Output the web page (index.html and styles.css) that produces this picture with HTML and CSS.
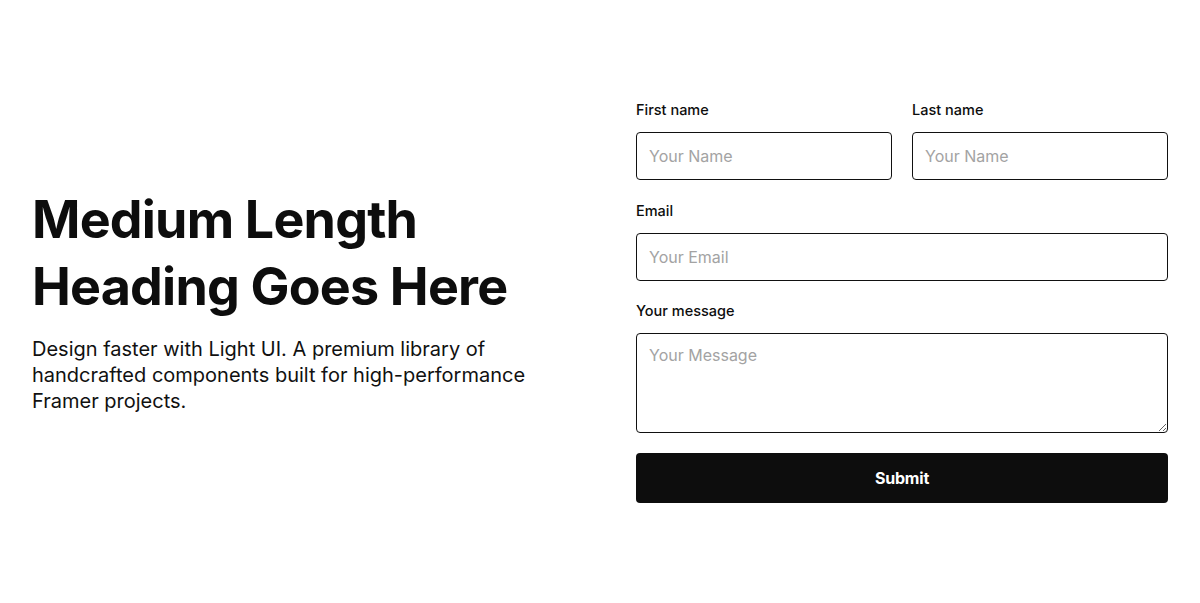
FILE: index.html
```html
<!DOCTYPE html>
<html lang="en">
<head>
<meta charset="utf-8">
<title>Contact</title>
<link rel="stylesheet" href="styles.css">
</head>
<body>
<main class="page">
  <section class="intro">
    <h1 class="heading">Medium Length Heading Goes Here</h1>
    <p class="lead">Design faster with Light UI. A premium library of handcrafted components built for high-performance Framer projects.</p>
  </section>
  <form class="form">
    <div class="row">
      <label class="field">
        <span class="label">First name</span>
        <input class="input" type="text" placeholder="Your Name">
      </label>
      <label class="field">
        <span class="label">Last name</span>
        <input class="input" type="text" placeholder="Your Name">
      </label>
    </div>
    <label class="field">
      <span class="label">Email</span>
      <input class="input" type="email" placeholder="Your Email">
    </label>
    <label class="field">
      <span class="label">Your message</span>
      <textarea class="input textarea" placeholder="Your Message"></textarea>
    </label>
    <button class="submit" type="button">Submit</button>
  </form>
</main>
</body>
</html>
```

FILE: styles.css
```css
* { box-sizing: border-box; }
html, body { margin: 0; padding: 0; background: #fff; }
body {
  font-family: Inter, "Liberation Sans", sans-serif;
  color: #0d0d0d;
}
.page {
  display: grid;
  grid-template-columns: 1fr 1fr;
  column-gap: 72px;
  align-items: center;
  padding: 0 32px;
  height: 603px;
}
.intro {
  margin-top: -4px;
}
.heading {
  margin: 0;
  font-size: 52px;
  line-height: 67px;
  font-weight: 700;
  letter-spacing: -0.8px;
}
.lead {
  margin: 16px 0 0;
  font-size: 20px;
  line-height: 26px;
  font-weight: 400;
  color: #111;
}
.form {
  display: flex;
  flex-direction: column;
  gap: 20px;
}
.row {
  display: grid;
  grid-template-columns: 1fr 1fr;
  column-gap: 20px;
  margin-bottom: 1px;
}
.field {
  display: flex;
  flex-direction: column;
  gap: 12px;
}
.label {
  font-size: 14.5px;
  line-height: 20px;
  font-weight: 500;
  letter-spacing: 0;
  color: #0d0d0d;
}
.input {
  height: 48px;
  width: 100%;
  border: 1px solid #111;
  border-radius: 4px;
  padding: 0 12px;
  font-family: Inter, "Liberation Sans", sans-serif;
  font-size: 16px;
  color: #111;
  background: #fff;
  outline: none;
}
.input::placeholder { color: #a3a3a3; }
.textarea {
  height: 100px;
  padding: 11px 12px;
  resize: vertical;
  display: block;
}
.submit {
  height: 50px;
  width: 100%;
  border: none;
  border-radius: 4px;
  background: #0d0d0d;
  color: #fff;
  font-family: Inter, "Liberation Sans", sans-serif;
  font-size: 16px;
  font-weight: 700;
  letter-spacing: -0.2px;
}
```
